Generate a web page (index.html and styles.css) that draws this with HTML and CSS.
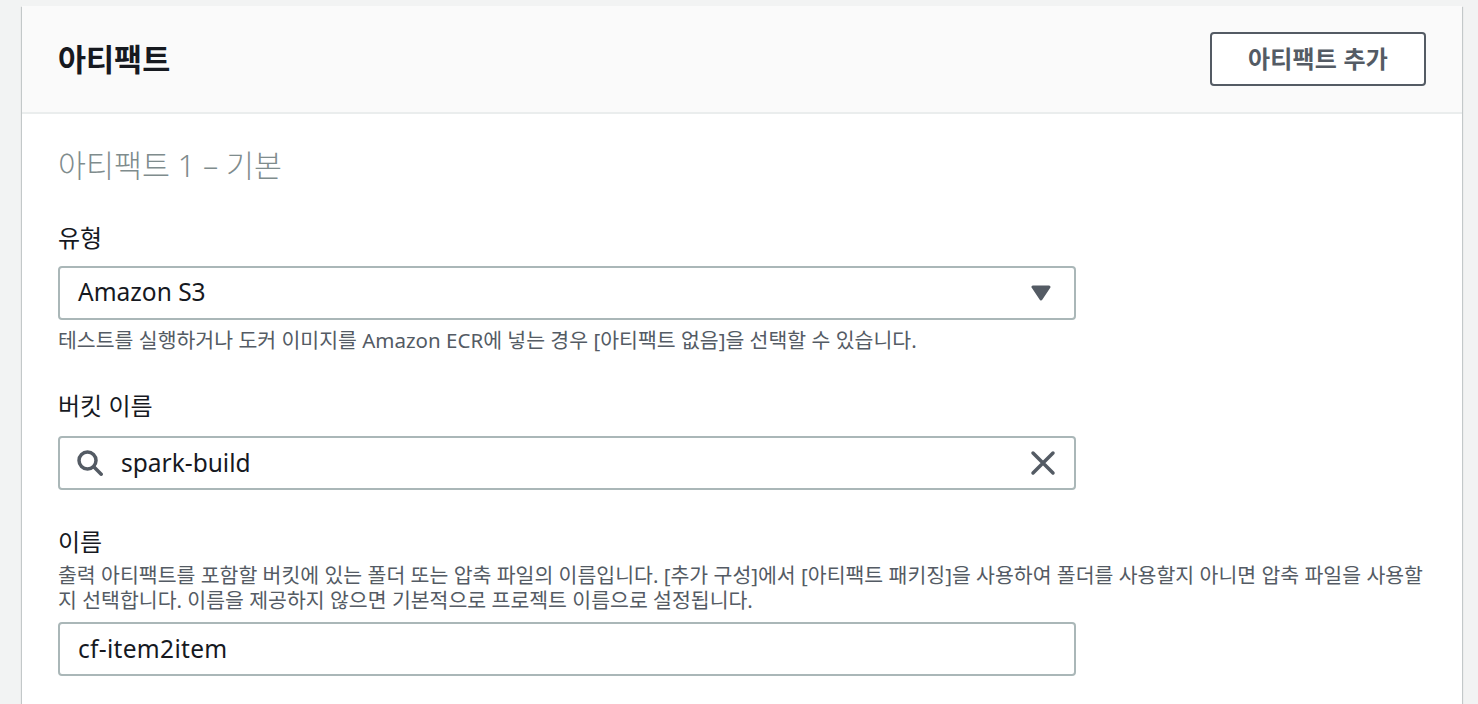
FILE: index.html
```html
<!DOCTYPE html>
<html lang="ko">
<head>
    <meta charset="UTF-8">
    <meta name="viewport" content="width=device-width, initial-scale=1.0">
    <title>아티팩트</title>
    <link rel="stylesheet" href="styles.css">
</head>
<body>
    <div class="card">
        <div class="card-header">
            <h2>아티팩트</h2>
            <button class="add-btn">아티팩트 추가</button>
        </div>
        <div class="card-body">
            <h3>아티팩트 1 – 기본</h3>

            <div class="field field-type">
                <label>유형</label>
                <div class="input">
                    <span class="value">Amazon S3</span>
                    <svg class="caret" width="20" height="16" viewBox="0 0 20 16">
                        <path d="M2 2h16l-8 12z" fill="#545b64" stroke="#545b64" stroke-width="3" stroke-linejoin="round"/>
                    </svg>
                </div>
                <p class="hint">테스트를 실행하거나 도커 이미지를 Amazon ECR에 넣는 경우 [아티팩트 없음]을 선택할 수 있습니다.</p>
            </div>

            <div class="field field-bucket">
                <label>버킷 이름</label>
                <div class="input">
                    <svg class="search" width="26" height="26" viewBox="0 0 26 26" fill="none" stroke="#545b64" stroke-width="3.5">
                        <circle cx="10.5" cy="10.5" r="8.5"/>
                        <path d="M17 17l7.2 7.2" stroke-linecap="round"/>
                    </svg>
                    <span class="value">spark-build</span>
                    <svg class="clear" width="26" height="26" viewBox="0 0 26 26" fill="none" stroke="#545b64" stroke-width="3.5" stroke-linecap="round">
                        <path d="M3 3l20 20M23 3L3 23"/>
                    </svg>
                </div>
            </div>

            <div class="field field-name">
                <label>이름</label>
                <p class="desc">출력 아티팩트를 포함할 버킷에 있는 폴더 또는 압축 파일의 이름입니다. [추가 구성]에서 [아티팩트 패키징]을 사용하여 폴더를 사용할지 아니면 압축 파일을 사용할지 선택합니다. 이름을 제공하지 않으면 기본적으로 프로젝트 이름으로 설정됩니다.</p>
                <div class="input">
                    <span class="value">cf-item2item</span>
                </div>
            </div>
        </div>
    </div>
</body>
</html>
```

FILE: styles.css
```css
html, body {
    height: 100%;
}
body {
    margin: 0;
    padding: 6px 16px 0 22px;
    box-sizing: border-box;
    overflow: hidden;
    font-family: "Noto Sans", "Noto Sans CJK KR", sans-serif;
    background-color: #f2f3f3;
    color: #16191f;
}
.card {
    background-color: white;
    box-shadow: 0 1px 1px 0 rgba(0, 28, 36, 0.3), 1px 1px 1px 0 rgba(0, 28, 36, 0.15), -1px 1px 1px 0 rgba(0, 28, 36, 0.15);
    height: 698px;
}
.card-header {
    display: flex;
    justify-content: space-between;
    align-items: center;
    box-sizing: border-box;
    height: 108px;
    padding: 0 36px;
    background-color: #fafafa;
    border-bottom: 2px solid #eaeded;
}
.card-header h2 {
    margin: 0;
    padding-top: 1px;
    font-size: 30.5px;
    font-weight: 700;
    line-height: 1;
}
.add-btn {
    width: 216px;
    height: 54px;
    padding: 0 0 3px;
    font-family: inherit;
    font-size: 24px;
    font-weight: 700;
    letter-spacing: 0.2px;
    color: #545b64;
    background-color: white;
    border: 2px solid #545b64;
    border-radius: 4px;
}
.card-body {
    padding: 32px 36px 0;
}
.card-body h3 {
    margin: 0;
    font-size: 30.4px;
    font-weight: 300;
    line-height: 40px;
    color: #7f8c8d;
}
.field label {
    display: block;
    font-size: 24px;
    line-height: 32px;
}
.field-type {
    margin-top: 36px;
}
.field-type label {
    margin-bottom: 12px;
}
.field-type .value {
    padding-bottom: 3px;
}
.field-bucket {
    margin-top: 37px;
}
.field-bucket label {
    margin-bottom: 14px;
}
.field-bucket .value {
    padding-bottom: 1px;
}
.field-name {
    margin-top: 36px;
}
.field-name .value {
    padding-bottom: 1px;
    letter-spacing: 0.3px;
}
.input {
    display: flex;
    align-items: center;
    box-sizing: border-box;
    width: 1018px;
    height: 54px;
    padding: 0 18px;
    background-color: white;
    border: 2px solid #aab7b8;
    border-radius: 4px;
}
.value {
    flex: 1;
    font-size: 24.5px;
}
.search {
    margin-left: -1px;
    margin-right: 18px;
}
.caret {
    margin-right: 5px;
}
.clear {
    margin-right: 0;
}
.hint, .desc {
    margin: 0;
    font-size: 20.5px;
    line-height: 25px;
    color: #545b64;
}
.hint {
    margin-top: 8px;
}
.desc {
    margin-top: 5px;
    margin-bottom: 9px;
}
```
